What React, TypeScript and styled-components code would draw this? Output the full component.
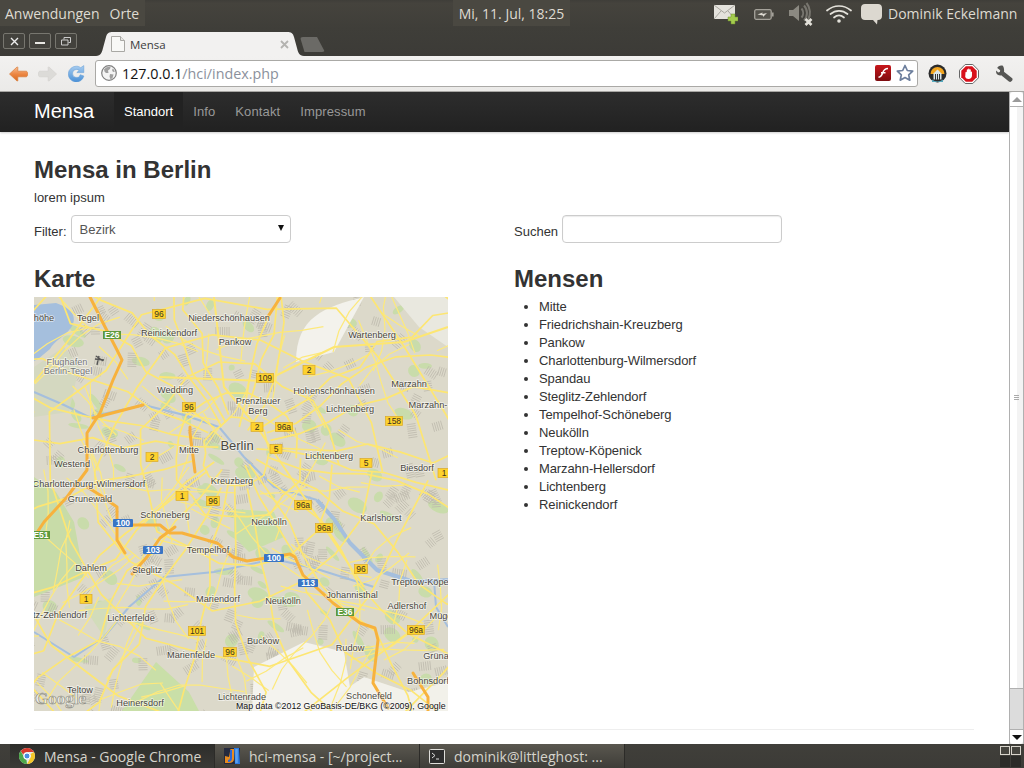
import React from 'react';
import styled, { createGlobalStyle } from 'styled-components';

const GlobalStyle = createGlobalStyle`
  html, body {
    margin: 0;
    padding: 0;
    overflow: hidden;
    background: #3c3b37;
  }
`;

const UI_FONT = `'Open Sans', 'Noto Sans', sans-serif`;
const WEB_FONT = `'Liberation Sans', Arial, sans-serif`;

const Screen = styled.div`
  width: 1024px;
  height: 768px;
  display: flex;
  flex-direction: column;
  overflow: hidden;
  font-family: ${WEB_FONT};
`;

/* ubuntu top panel */
const TopPanel = styled.div`
  height: 28px;
  flex: none;
  display: flex;
  background: linear-gradient(#3f3e39, #45433d 12%, #3f3e39);
  color: #dfdbd2;
  font-family: ${UI_FONT};
  font-size: 14px;
`;

const PanelSection = styled.div<{ $w: number; $light?: boolean }>`
  width: ${(p) => p.$w}px;
  flex: none;
  height: 26px;
  display: flex;
  align-items: center;
  background: ${(p) => (p.$light ? '#4a4841' : 'transparent')};
`;

const MenuLabel = styled.span`
  margin-left: 5px;
  margin-right: 5px;
`;

const Clock = styled.span`
  width: 100%;
  text-align: center;
`;

const TraySlot = styled.div<{ $w: number }>`
  width: ${(p) => p.$w}px;
  flex: none;
  height: 28px;
  display: flex;
  align-items: center;
  justify-content: center;
`;

const UserName = styled.span`
  margin-left: 2px;
  line-height: 27px;
  white-space: nowrap;
`;

/* chrome */
const TabStrip = styled.div`
  height: 28px;
  flex: none;
  display: flex;
  background: linear-gradient(#3f3e39, #3c3b37);
  padding-left: 3px;
`;

const WindowButtons = styled.div`
  display: flex;
  gap: 4px;
  padding-top: 5px;
  width: 93px;
  flex: none;
`;

const WindowButton = styled.div`
  width: 20px;
  height: 14px;
  border: 1px solid #77766f;
  border-radius: 2px;
  display: flex;
  align-items: center;
  justify-content: center;
  background: #43423d;
`;

const Tab = styled.div`
  width: 208px;
  height: 24px;
  margin-top: 4px;
  flex: none;
  display: flex;
  align-items: center;
  padding: 0 15px 0 15px;
  box-sizing: border-box;
  background: #f2f1f0;
  clip-path: path('M0 24 C5 24 6 20 7 16 L10 5 C11 1 13 0 17 0 L191 0 C195 0 197 1 198 5 L201 16 C202 20 203 24 208 24 Z');
  color: #3c3c3c;
  font-family: ${UI_FONT};
  font-size: 11.5px;
`;

const TabTitle = styled.span`
  margin-left: 5px;
  flex: 1;
`;

const NewTab = styled.div`
  width: 25px;
  height: 15px;
  margin-top: 9px;
  margin-left: -4px;
  background: #6b6a66;
  clip-path: polygon(0 0, 68% 0, 100% 100%, 18% 100%);
  border-radius: 3px;
`;

const Toolbar = styled.div`
  height: 36px;
  flex: none;
  box-sizing: border-box;
  display: flex;
  align-items: center;
  background: linear-gradient(#f2f1f0, #ebeae8);
  border-bottom: 1px solid #a9a8a5;
  padding-left: 9px;
`;

const NavIcon = styled.div<{ $w: number; $pad?: number }>`
  width: ${(p) => p.$w}px;
  padding-left: ${(p) => p.$pad ?? 0}px;
  box-sizing: border-box;
  flex: none;
  display: flex;
  align-items: center;
`;

const Omnibox = styled.div`
  width: 823px;
  height: 27px;
  flex: none;
  box-sizing: border-box;
  display: flex;
  align-items: center;
  gap: 5px;
  background: #fff;
  border: 1px solid #aaa9a6;
  border-radius: 3px;
  padding: 0 3px 0 5px;
  margin-top: -1px;
`;

const Url = styled.div`
  flex: 1;
  font-family: ${UI_FONT};
  font-size: 14.3px;
  color: #8b919c;
`;

const UrlHost = styled.span`
  color: #111;
`;

const Browser = styled.div`
  flex: 1;
  min-height: 0;
  display: flex;
  background: #fff;
`;

const Page = styled.div`
  flex: 1;
  min-width: 0;
  display: flex;
  flex-direction: column;
  color: #333;
  font-size: 13px;
`;

const NavBar = styled.div`
  height: 40px;
  flex: none;
  display: flex;
  align-items: stretch;
  padding-left: 34px;
  background: linear-gradient(#2d2d2d, #212121);
  box-shadow: 0 1px 2px rgba(0, 0, 0, 0.2);
`;

const Brand = styled.div`
  width: 80px;
  font-size: 20px;
  line-height: 39px;
  color: #fff;
`;

const NavItem = styled.div<{ $active?: boolean }>`
  padding: 0 10px;
  line-height: 40px;
  font-size: 13px;
  letter-spacing: ${(p) => (p.$active ? '0' : '0.12px')};
  color: ${(p) => (p.$active ? '#fff' : '#999')};
  background: ${(p) => (p.$active ? '#222' : 'transparent')};
`;

const Content = styled.div`
  width: 940px;
  margin-left: 34px;
  flex: 1;
  display: flex;
  flex-direction: column;
`;

const Title = styled.h1`
  margin: 22px 0 0;
  font-size: 24px;
  line-height: 32px;
  font-weight: bold;
  color: #333;
`;

const Lead = styled.p`
  margin: 3px 0 0;
  line-height: 18px;
  color: #333;
`;

const Columns = styled.div`
  display: grid;
  grid-template-columns: 480px 460px;
`;

const FormRow = styled(Columns)`
  margin-top: 8px;
`;

const Field = styled.label`
  display: flex;
  align-items: center;
  gap: 4px;
  height: 28px;
`;

const FieldLabel = styled.span`
  padding-top: 4px;
`;

const FakeSelect = styled.div`
  width: 220px;
  height: 28px;
  box-sizing: border-box;
  display: flex;
  align-items: center;
  justify-content: space-between;
  padding: 0 6px 0 8px;
  border: 1px solid #ccc;
  border-radius: 4px;
  background: #fff;
  color: #555;
`;

const SelectArrow = styled.span`
  width: 0;
  height: 0;
  margin-bottom: 2px;
  border-left: 3.5px solid transparent;
  border-right: 3.5px solid transparent;
  border-top: 6px solid #111;
`;

const SearchInput = styled.div`
  width: 220px;
  height: 28px;
  box-sizing: border-box;
  border: 1px solid #ccc;
  border-radius: 4px;
  background: #fff;
  box-shadow: inset 0 1px 1px rgba(0, 0, 0, 0.08);
`;

const SectionTitle = styled.h2`
  margin: 0;
  font-size: 24px;
  line-height: 32px;
  font-weight: bold;
  color: #333;
`;

const ResultRow = styled(Columns)`
  margin-top: 20px;
`;

const MapFrame = styled.svg`
  display: block;
  width: 414px;
  height: 414px;
  margin-top: 2px;
`;

const MapLabel = styled.text<{ $size?: number; $muted?: boolean }>`
  font-family: ${WEB_FONT};
  font-size: ${(p) => p.$size ?? 9.2}px;
  fill: ${(p) => (p.$muted ? '#777' : '#4a4740')};
  stroke: rgba(255, 255, 255, 0.6);
  stroke-width: 1.6px;
  paint-order: stroke;
  text-anchor: middle;
`;

const ShieldText = styled.text<{ $light?: boolean }>`
  font-family: ${WEB_FONT};
  font-size: 8.5px;
  font-weight: ${(p) => (p.$light ? 'bold' : 'normal')};
  fill: ${(p) => (p.$light ? '#fff' : '#3c3420')};
  text-anchor: middle;
`;

const Attribution = styled.text`
  font-family: ${WEB_FONT};
  font-size: 8.8px;
  fill: #111;
  stroke: rgba(255, 255, 255, 0.55);
  stroke-width: 1.4px;
  paint-order: stroke;
`;

const Watermark = styled.text`
  font-family: 'Liberation Serif', serif;
  font-size: 17px;
  font-weight: bold;
  fill: rgba(255, 255, 255, 0.55);
  stroke: #8a8a80;
  stroke-width: 0.6px;
`;

const MensaList = styled.ul`
  margin: 3px 0 0;
  padding: 0 0 0 25px;
  list-style: disc;
  line-height: 18px;
  letter-spacing: -0.1px;
  color: #333;
`;

const Rule = styled.hr`
  width: 100%;
  margin: 18px 0 0;
  border: 0;
  border-top: 1px solid #eee;
`;

const ScrollBar = styled.div`
  width: 15px;
  flex: none;
  box-sizing: border-box;
  display: flex;
  flex-direction: column;
  background: #dcdcdc;
  border-left: 1px solid #b0b0b0;
  border-right: 1px solid #b0b0b0;
`;

const ScrollButton = styled.div<{ $down?: boolean }>`
  height: 15px;
  flex: none;
  display: flex;
  align-items: center;
  justify-content: center;
  background: #fff;
  border-radius: ${(p) => (p.$down ? '0 0 3px 3px' : '3px 3px 0 0')};
  border-top: ${(p) => (p.$down ? '1px solid #b0b0b0' : '0')};
  border-bottom: ${(p) => (p.$down ? '0' : '1px solid #b0b0b0')};
  box-sizing: border-box;
`;

const ScrollArrow = styled.span<{ $down?: boolean }>`
  width: 0;
  height: 0;
  border-left: 5px solid transparent;
  border-right: 5px solid transparent;
  ${(p) => (p.$down ? 'border-top: 5px solid #111;' : 'border-bottom: 5px solid #9a9a9a;')}
`;

const ScrollThumb = styled.div`
  height: 581px;
  flex: none;
  display: flex;
  flex-direction: column;
  align-items: center;
  justify-content: center;
  gap: 1px;
  background: linear-gradient(90deg, #fff 55%, #f3f3f3 55%);
  border-bottom: 1px solid #b0b0b0;
`;

const Grip = styled.span`
  width: 5px;
  height: 1px;
  background: #aaa;
`;

const ScrollTrack = styled.div`
  flex: 1;
`;

/* ubuntu bottom panel */
const TaskBar = styled.div`
  height: 24px;
  flex: none;
  display: flex;
  background: linear-gradient(#403f3a, #3c3b37);
  padding-left: 10px;
  font-family: ${UI_FONT};
  font-size: 14px;
  color: #d6d4cc;
`;

const TaskItem = styled.div<{ $active?: boolean }>`
  width: 205px;
  flex: none;
  box-sizing: border-box;
  display: flex;
  align-items: center;
  gap: 9px;
  padding-left: 9px;
  border-right: 1px solid #2c2b28;
  white-space: nowrap;
  background: ${(p) => (p.$active ? 'linear-gradient(#2d2d2a, #3b3a36)' : 'linear-gradient(#5a574f, #3e3d38)')};
`;

const TaskSpacer = styled.div`
  flex: 1;
`;

const Workspaces = styled.div`
  display: grid;
  grid-template-columns: 10px 10px;
  grid-template-rows: 9px 11px;
  gap: 1px;
  width: 24px;
  flex: none;
  padding-top: 2px;
`;

const Workspace = styled.span<{ $on?: boolean }>`
  background: ${(p) => (p.$on ? '#45443e' : '#2b2b28')};
  border: ${(p) => (p.$on ? '1px solid #d8d5cc' : '0')};
  box-sizing: border-box;
`;

/* ---- tray + toolbar icons ---- */

const MailIcon = () => (
  <svg width="25" height="22" viewBox="0 0 25 22">
    <path d="M1 2h21v14H1z" fill="#e4e2dc" />
    <path d="M1 2l10.5 8L22 2M1 16l7-8M22 16l-7-8" fill="none" stroke="#a8a69f" strokeWidth="1" />
    <path d="M15 14h3v-3h4v3h3v4h-3v3h-4v-3h-3z" fill="#a4cb4e" stroke="#6f8f2c" strokeWidth=".5" />
  </svg>
);

const BatteryIcon = () => (
  <svg width="20" height="11" viewBox="0 0 20 11">
    <rect x=".7" y=".7" width="16.5" height="9.6" rx="1.5" fill="#55534c" stroke="#a5a29a" strokeWidth="1.3" />
    <rect x="17.8" y="3.5" width="1.8" height="4" fill="#a5a29a" />
    <path d="M3.5 5.5l5-2v1.6l4.5-1-4 4V6.6z" fill="#dcd9d1" />
  </svg>
);

const SpeakerIcon = () => (
  <svg width="26" height="24" viewBox="0 0 26 24">
    <path d="M1 8h4l6-5v16l-6-5H1z" fill="#8b8981" />
    <path d="M13.5 6.5a7 7 0 0 1 0 9M16 3.5a11 11 0 0 1 0 15M18.5 1a15 15 0 0 1 1.5 17" fill="none" stroke="#78766f" strokeWidth="2" />
    <path d="M17.5 17l6 6m0-6l-6 6" stroke="#e3e1da" strokeWidth="2.6" />
  </svg>
);

const WifiIcon = () => (
  <svg width="26" height="20" viewBox="0 0 26 20">
    <g fill="none" stroke="#e4e2db" strokeWidth="1.7" strokeLinecap="round">
      <path d="M1 6.5c7-6 17-6 24 0" />
      <path d="M4.5 10c5-4.2 12-4.2 17 0" />
      <path d="M8 13.5c3-2.500 7-2.500 10 0" />
    </g>
    <circle cx="13" cy="17" r="1.8" fill="#e4e2db" />
  </svg>
);

const BubbleIcon = () => (
  <svg width="23" height="22" viewBox="0 0 23 22">
    <path d="M5 1h13c2.500 0 4 1.500 4 4v8c0 2.500-1.500 4-4 4h-.5l-.5 4.500L13 17H5c-2.500 0-4-1.500-4-4V5c0-2.500 1.500-4 4-4z" fill="#dcd8d0" />
  </svg>
);

const CloseGlyph = () => (
  <svg width="9" height="9" viewBox="0 0 9 9">
    <path d="M1 1l7 7M8 1L1 8" stroke="#eee" strokeWidth="1.4" />
  </svg>
);

const MinGlyph = () => (
  <svg width="10" height="8" viewBox="0 0 10 8">
    <path d="M0 6h10" stroke="#e8e8e4" strokeWidth="2" />
  </svg>
);

const RestoreGlyph = () => (
  <svg width="10" height="9" viewBox="0 0 10 9">
    <path d="M3 2.5V.5h6.500v5H7.500M.5 3h6.500v5H.5z" fill="none" stroke="#ccc" />
  </svg>
);

const PageIcon = () => (
  <svg width="14" height="16" viewBox="0 0 14 16">
    <path d="M.5.5h9l4 4v11H.5z" fill="#f8f8f6" stroke="#a9a8a4" />
    <path d="M9.5.5v4h4" fill="#e6e5e2" stroke="#a9a8a4" />
  </svg>
);

const TabClose = () => (
  <svg width="9" height="9" viewBox="0 0 9 9">
    <path d="M1 1l7 7M8 1L1 8" stroke="#b4b3b0" strokeWidth="1.8" />
  </svg>
);

const BackIcon = () => (
  <svg width="19" height="16" viewBox="0 0 19 16">
    <defs>
      <linearGradient id="backFill" x1="0" y1="0" x2="0" y2="1">
        <stop offset="0" stopColor="#f8bc92" />
        <stop offset=".5" stopColor="#ec8743" />
        <stop offset="1" stopColor="#d8681f" />
      </linearGradient>
    </defs>
    <path d="M.5 8L8 1c.4-.3.8 0 .8.4v3.800h8c1 0 1.700.7 1.700 1.500v2.600c0 .8-.7 1.500-1.700 1.500h-8v3.800c0 .4-.4.7-.8.4z" fill="url(#backFill)" stroke="#d97c3a" strokeWidth=".7" strokeLinejoin="round" />
  </svg>
);

const ForwardIcon = () => (
  <svg width="19" height="16" viewBox="0 0 19 16">
    <path d="M18.5 8L11 1c-.4-.3-.8 0-.8.4v3.800h-8C1.200 5.200.5 5.900.5 6.700v2.600c0 .8.700 1.500 1.700 1.500h8v3.800c0 .4.400.7.800.4z" fill="#dcdbd8" stroke="#d4d3d0" strokeWidth=".7" strokeLinejoin="round" />
  </svg>
);

const ReloadIcon = () => (
  <svg width="17" height="17" viewBox="0 0 17 17">
    <defs>
      <linearGradient id="reloadFill" x1="0" y1="0" x2="0" y2="1">
        <stop offset="0" stopColor="#a8cdf0" />
        <stop offset="1" stopColor="#4a90d6" />
      </linearGradient>
    </defs>
    <path d="M8.5 1.200c1.700 0 3.100.6 4.200 1.500L15.800.6v7h-7l2.400-2.300c-.7-.6-1.600-.9-2.700-.9a4 4 0 1 0 3.800 5.300l3.600 1.300A7.900 7.900 0 1 1 8.500 1.200z" fill="url(#reloadFill)" stroke="#5f9ad6" strokeWidth=".5" />
  </svg>
);

const GlobeIcon = () => (
  <svg width="16" height="16" viewBox="0 0 16 16">
    <circle cx="8" cy="8" r="7.3" fill="#f4f4f4" stroke="#808080" strokeWidth="1.2" />
    <path d="M3 4.500c2-2.500 5-3 6.500-2.500L9 4 7 5.500 7.500 8 5 8 3.500 6.500zM9 9l3.500.5-1 3.500-2 1.500-1-3zM12 3.500l2 3-2 .5-1-2z" fill="#a0a0a0" />
  </svg>
);

const FlashIcon = () => (
  <svg width="16" height="16" viewBox="0 0 16 16">
    <defs>
      <linearGradient id="flashFill" x1="0" y1="0" x2="0" y2="1">
        <stop offset="0" stopColor="#c8161b" />
        <stop offset="1" stopColor="#7d0d10" />
      </linearGradient>
    </defs>
    <rect width="16" height="16" rx="2" fill="url(#flashFill)" />
    <path d="M13 3.500c-3.500 0-4.500 2-5.300 4.200C7 10 6.300 11.800 3.500 12.300M6 7.800h4.500" fill="none" stroke="#fff" strokeWidth="1.5" />
  </svg>
);

const StarIcon = () => (
  <svg width="18" height="18" viewBox="0 0 18 18">
    <path d="M9 1.500l2.300 5 5.400.6-4 3.700 1.100 5.400L9 13.500l-4.800 2.700 1.100-5.400-4-3.700 5.400-.6z" fill="#fff" stroke="#6d7f9d" strokeWidth="1.7" strokeLinejoin="round" />
  </svg>
);

const ExtensionDomeIcon = () => (
  <svg width="19" height="19" viewBox="0 0 19 19">
    <circle cx="9.500" cy="9.500" r="9" fill="#2b2b2b" />
    <path d="M2.500 10a7 7 0 0 1 14 0z" fill="#f2a51f" />
    <path d="M5.500 9.500l4-4 4 4v6h-8z" fill="#d9e4e8" />
    <path d="M7.500 10v6M9.500 10v6M11.500 10v6" stroke="#333" strokeWidth="1" />
    <path d="M4 15.500c3.500 2.500 7.500 2.500 11 0v2.500H4z" fill="#58a8bd" />
  </svg>
);

const AdblockIcon = () => (
  <svg width="20" height="20" viewBox="0 0 20 20">
    <path d="M6.200.5h7.600l5.700 5.700v7.600l-5.700 5.700H6.200L.5 13.800V6.200z" fill="#fff" stroke="#666" />
    <path d="M6.800 2.300h6.400l4.500 4.500v6.400l-4.500 4.500H6.800l-4.500-4.500V6.800z" fill="#d8111b" />
    <path d="M6.500 8.500c0-1 1.200-1 1.300 0V6c0-1 1.300-1 1.300 0V5.300c0-1 1.400-1 1.400 0V6c0-.9 1.300-.9 1.300 0v2c0-.8 1.200-.8 1.200 0v3.500c0 2-1.500 3.500-3.500 3.500-1.800 0-2.700-.8-3.300-2.200z" fill="#fff" />
  </svg>
);

const WrenchIcon = () => (
  <svg width="17" height="17" viewBox="0 0 17 17">
    <path d="M6.500.6C4.300 0 2 1 1.200 3l3 2.200-.4 1.800-1.700.6L.3 5.500C-.4 7.700.7 9.800 3 10.300c.8.200 1.500.1 2.200-.1l7.700 6.300c.8.600 1.800.5 2.500-.2l.8-.9c.6-.8.500-1.800-.3-2.400L8 6.800c.4-2.800-.4-5.500-1.500-6.200z" fill="#565654" />
  </svg>
);

const ChromeLogo = () => (
  <svg width="16" height="16" viewBox="0 0 16 16">
    <circle cx="8" cy="8" r="8" fill="#e8e8e8" />
    <path d="M8 0a8 8 0 0 1 6.900 4H8a4 4 0 0 0-3.800 2.800L1.700 3A8 8 0 0 1 8 0z" fill="#d93a2c" />
    <path d="M14.900 4A8 8 0 0 1 8 16l3.400-5.900A4 4 0 0 0 11.500 6z" fill="#f5c728" />
    <path d="M8 16A8 8 0 0 1 1.700 3l2.600 4.800a4 4 0 0 0 3.200 4.100z" fill="#4da84a" />
    <circle cx="8" cy="8" r="3" fill="#4a8ee0" stroke="#fff" strokeWidth="1" />
  </svg>
);

const IdeaLogo = () => (
  <svg width="16" height="18" viewBox="0 0 16 18">
    <path d="M0 1h16v16H0z" fill="#252a3e" />
    <path d="M10 1h5l1 16h-5z" fill="#2e7be0" />
    <path d="M6.500 2H10v10c0 2.500-2 4-5 4H1V9l4 1z" fill="#e88b1f" />
    <path d="M7 3v8c0 2-1 3-3 3" fill="none" stroke="#2a66d8" strokeWidth="2" />
    <path d="M12.500 2v14" stroke="#5aa0f0" strokeWidth="2.5" />
  </svg>
);

const TerminalLogo = () => (
  <svg width="16" height="15" viewBox="0 0 16 15">
    <rect x=".5" y=".5" width="15" height="14" rx="1" fill="#2d2d2d" stroke="#e0dfdb" />
    <path d="M3 4l3 2.500L3 9M7 10h3" fill="none" stroke="#ddd" strokeWidth="1" />
  </svg>
);

/* ---- the map ---- */

type Pt = [number, number];

const line = (pts: Pt[]) => pts.map((p, i) => `${i ? 'L' : 'M'}${p[0]} ${p[1]}`).join(' ');

const seeded = (seed: number) => () => {
  seed = (seed + 0x6d2b79f5) | 0;
  let t = Math.imul(seed ^ (seed >>> 15), 1 | seed);
  t = (t + Math.imul(t ^ (t >>> 7), 61 | t)) ^ t;
  return ((t ^ (t >>> 14)) >>> 0) / 4294967296;
};

const CENTER: Pt = [203, 150];

// little gray street blocks, clustered so they read as town texture
const makeStreets = () => {
  const rnd = seeded(42);
  const out: string[] = [];
  for (let c = 0; c < 240; c++) {
    const cx = rnd() * 414;
    const cy = rnd() * 414;
    const a = rnd() * Math.PI;
    const n = 4 + Math.floor(rnd() * 4);
    const dx = Math.cos(a);
    const dy = Math.sin(a);
    for (let i = 0; i < n; i++) {
      const x = cx - dy * i * 2.2;
      const y = cy + dx * i * 2.2;
      out.push(`M${x.toFixed(1)} ${y.toFixed(1)}l${(dx * 9).toFixed(1)} ${(dy * 9).toFixed(1)}`);
    }
  }
  return out.join(' ');
};

const makeGreens = () => {
  const rnd = seeded(7);
  const out: { x: number; y: number; w: number; h: number; r: number }[] = [];
  for (let i = 0; i < 110; i++) {
    out.push({ x: rnd() * 414, y: rnd() * 414, w: 6 + rnd() * 16, h: 4 + rnd() * 10, r: rnd() * 60 });
  }
  return out;
};

const makeRadials = () => {
  const rnd = seeded(19);
  const out: string[] = [];
  for (let deg = 0; deg < 360; deg += 13) {
    const pts: Pt[] = [];
    let a = (deg * Math.PI) / 180;
    for (let r = 18 + rnd() * 25; r < 340; r += 32) {
      a += (rnd() - 0.5) * 0.16;
      pts.push([+(CENTER[0] + Math.cos(a) * r).toFixed(1), +(CENTER[1] + 40 * (r / 340) + Math.sin(a) * r).toFixed(1)]);
    }
    out.push(line(pts));
  }
  return out;
};

const makeRings = () => {
  const rnd = seeded(23);
  const out: string[] = [];
  [34, 62, 98, 138, 185, 235, 290].forEach((r) => {
    const pts: Pt[] = [];
    for (let deg = 0; deg <= 360; deg += 20) {
      const a = (deg * Math.PI) / 180;
      const rr = r + (rnd() - 0.5) * (r * 0.16);
      pts.push([+(CENTER[0] + Math.cos(a) * rr).toFixed(1), +(CENTER[1] + r * 0.18 + Math.sin(a) * rr).toFixed(1)]);
    }
    out.push(line(pts));
  });
  return out;
};

const makeMinorRoads = () => {
  const rnd = seeded(77);
  const out: string[] = [];
  for (let i = 0; i < 110; i++) {
    let x = rnd() * 414;
    let y = rnd() * 414;
    let a = rnd() * Math.PI * 2;
    const pts: Pt[] = [[+x.toFixed(1), +y.toFixed(1)]];
    const n = 2 + Math.floor(rnd() * 4);
    for (let k = 0; k < n; k++) {
      a += (rnd() - 0.5) * 0.6;
      x += Math.cos(a) * 22;
      y += Math.sin(a) * 22;
      pts.push([+x.toFixed(1), +y.toFixed(1)]);
    }
    out.push(line(pts));
  }
  return out;
};

const STREETS = makeStreets();
const GREENS = makeGreens();
const RADIALS = makeRadials();
const RINGS = makeRings();
const MINOR = makeMinorRoads();

const AUTOBAHNS: Pt[][] = [
  [[56, 0], [69, 26], [83, 53], [88, 63], [79, 83], [66, 116], [53, 136], [53, 173], [33, 200], [10, 225], [0, 240]],
  [[53, 190], [66, 198], [83, 210], [83, 243], [91, 256]],
  [[59, 121], [109, 108]],
  [[83, 228], [126, 228], [136, 236], [148, 236], [183, 246], [199, 260], [213, 264], [256, 257], [261, 260], [269, 278], [299, 306], [326, 326], [341, 331], [344, 343], [339, 386], [354, 411]],
  [[141, 230], [126, 241], [113, 260], [98, 277]],
  [[156, 130], [156, 136], [161, 175]],
  [[246, 1], [233, 21]],
  [[379, 376], [394, 400], [394, 414]],
];

const WATER: string[] = [
  'M0 8 L22 6 C40 12 44 22 36 32 C30 40 20 44 16 52 L4 62 L0 64 Z',
];

const WATERWAYS: Pt[][] = [
  [[0, 95], [30, 108], [55, 120], [110, 108], [150, 118], [185, 130]],
  [[283, 203], [300, 222], [316, 246], [343, 273], [380, 285], [414, 283]],
  [[0, 335], [40, 360], [70, 340], [95, 310], [130, 280], [180, 275], [240, 262], [283, 272], [340, 290]],
  [[400, 283], [402, 310], [414, 330]],
  [[185, 130], [210, 160], [240, 190], [283, 203]],
];

const SHIELDS: [number, number, string][] = [
  [125, 17, '96'], [275, 73, '2'], [231, 81, '109'], [155, 110, '96'], [360, 124, '158'],
  [223, 130, '2'], [250, 130, '96a'], [242, 152, '5'], [118, 160, '2'], [332, 166, '5'],
  [410, 176, '1'], [148, 199, '1'], [179, 204, '96'], [269, 208, '96a'], [290, 231, '96a'],
  [327, 272, '96'], [52, 302, '1'], [163, 334, '101'], [196, 355, '96'], [382, 333, '96a'],
];

const BLUE_SHIELDS: [number, number, string][] = [
  [89, 226, '100'], [119, 253, '103'], [240, 261, '100'], [274, 286, '113'],
];

const GREEN_SHIELDS: [number, number, string][] = [
  [78, 38, 'E26'], [7, 238, 'E51'], [311, 315, 'E36'],
];

const LABELS: [number, number, string][] = [
  [10, 24, 'höhe'], [54, 24, 'Tegel'], [195, 24, 'Niederschönhausen'], [135, 39, 'Reinickendorf'],
  [201, 48, 'Pankow'], [338, 41, 'Wartenberg'], [141, 96, 'Wedding'], [300, 97, 'Hohenschönhausen'],
  [375, 90, 'Marzahn'], [394, 111, 'Marzahn-'], [224, 107, 'Prenzlauer'], [224, 117, 'Berg'],
  [316, 115, 'Lichtenberg'], [74, 156, 'Charlottenburg'], [155, 156, 'Mitte'], [295, 162, 'Lichtenberg'],
  [38, 170, 'Westend'], [383, 174, 'Biesdorf'], [55, 190, 'Charlottenburg-Wilmersdorf'], [198, 187, 'Kreuzberg'],
  [56, 205, 'Grunewald'], [131, 221, 'Schöneberg'], [235, 228, 'Neukölln'], [347, 224, 'Karlshorst'],
  [174, 256, 'Tempelhof'], [57, 274, 'Dahlem'], [113, 276, 'Steglitz'], [318, 301, 'Johannisthal'],
  [386, 288, 'Treptow-Köpe'], [184, 305, 'Mariendorf'], [249, 307, 'Neukölln'], [373, 312, 'Adlershof'],
  [407, 322, 'Mügg'], [26, 321, 'tz-Zehlendorf'], [97, 324, 'Lichterfelde'], [229, 347, 'Buckow'],
  [316, 354, 'Rudow'], [157, 361, 'Marienfelde'], [402, 362, 'Grüna'], [394, 387, 'Bohnsdorf'],
  [46, 396, 'Teltow'], [106, 409, 'Heinersdorf'], [208, 403, 'Lichtenrade'], [335, 402, 'Schönefeld'],
];

const BerlinMap = () => (
  <MapFrame viewBox="0 0 414 414">
    <defs>
      <filter id="soft" x="0" y="0" width="100%" height="100%">
        <feGaussianBlur stdDeviation="0.35" />
      </filter>
    </defs>
    <g filter="url(#soft)">
      <rect width="414" height="414" fill="#dcd9ca" />
      {GREENS.map((g, i) => (
        <ellipse key={i} cx={g.x} cy={g.y} rx={g.w / 2} ry={g.h / 2} transform={`rotate(${g.r} ${g.x} ${g.y})`} fill="#c9dcab" />
      ))}
      <path d={STREETS} stroke="#bdb9ac" strokeWidth=".8" fill="none" />
      {/* parks, forests, airfields */}
      <path d="M0 70 L30 50 L45 70 L35 115 L0 120 Z" fill="#d4d8c0" />
      <path d="M0 180 L22 195 L40 225 L50 280 L0 300 Z" fill="#c8dca8" />
      <path d="M200 212 L240 215 L250 240 L215 255 L200 240 Z" fill="#c9dfa9" />
      <path d="M88 414 L122 365 L155 395 L165 414 Z" fill="#c9dfa8" />
      <path d="M262 65 C262 20 290 10 330 0 L300 55 Z" fill="#f3f2ec" />
      <path d="M220 370 L270 345 L310 355 L320 414 L218 414 Z" fill="#f4f3ee" />
      <path d="M300 400 L330 380 L375 395 L414 385 L414 414 L300 414 Z" fill="#f2f1ea" />
      <path d="M360 0 L414 0 L414 50 L385 30 Z" fill="#e9e8df" />
      <path d="M50 310 L80 300 L70 340 Z" fill="#d2dcba" />
      {/* water */}
      {WATER.map((d) => (
        <path key={d} d={d} fill="#a5bfdd" />
      ))}
      {WATERWAYS.map((w, i) => (
        <path key={i} d={line(w)} fill="none" stroke="#a5bfdd" strokeWidth={i === 1 ? 4 : 2} strokeLinejoin="round" />
      ))}
      {/* roads */}
      {MINOR.map((d, i) => (
        <path key={i} d={d} fill="none" stroke="#fde97c" strokeWidth="1.2" strokeLinejoin="round" />
      ))}
      {RINGS.map((d, i) => (
        <path key={i} d={d} fill="none" stroke="#fde672" strokeWidth="1.7" strokeLinejoin="round" />
      ))}
      {RADIALS.map((d, i) => (
        <path key={i} d={d} fill="none" stroke="#fde672" strokeWidth="1.7" strokeLinejoin="round" />
      ))}
      <path d="M125 80 L231 84 L300 50 L370 45 L414 30" fill="none" stroke="#fde672" strokeWidth="2.2" />
      <path d="M180 0 L190 90 L223 130 L270 200 L330 290" fill="none" stroke="#fde672" strokeWidth="2" />
      {AUTOBAHNS.map((a, i) => (
        <path key={i} d={line(a)} fill="none" stroke="#f7b23e" strokeWidth="3" strokeLinejoin="round" strokeLinecap="round" />
      ))}
      {/* airport mark */}
      <path d="M62 59l7 5m-4-5l-2 9m-2-6l9 1" stroke="#555" strokeWidth="1.3" fill="none" />
    </g>
    <MapLabel $muted x={33} y={68}>Flughafen</MapLabel>
    <MapLabel $muted x={34} y={77}>Berlin-Tegel</MapLabel>
    {LABELS.map(([x, y, t]) => (
      <MapLabel key={`${t}${x}`} x={x} y={y}>{t}</MapLabel>
    ))}
    <MapLabel x={203} y={153} $size={13}>Berlin</MapLabel>
    {SHIELDS.map(([x, y, t]) => {
      const w = t.length > 1 ? (t.length > 2 ? 17 : 13) : 12;
      return (
        <g key={`${x}-${y}`}>
          <rect x={x - w / 2} y={y - 4.5} width={w} height="9" fill="#fdd22e" stroke="#d9a92a" strokeWidth=".7" />
          <ShieldText x={x} y={y + 3}>{t}</ShieldText>
        </g>
      );
    })}
    {BLUE_SHIELDS.map(([x, y, t]) => (
      <g key={`${x}-${y}`}>
        <rect x={x - 10} y={y - 4} width="20" height="8" rx="1" fill="#3a75c4" />
        <ShieldText $light x={x} y={y + 3}>{t}</ShieldText>
      </g>
    ))}
    {GREEN_SHIELDS.map(([x, y, t]) => (
      <g key={`${x}-${y}`}>
        <rect x={x - 9} y={y - 4} width="18" height="8" fill="#5d9a3c" />
        <ShieldText $light x={x} y={y + 3}>{t}</ShieldText>
      </g>
    ))}
    <Watermark x={1} y={407}>Google</Watermark>
    <Attribution x={202} y={412}>Map data ©2012 GeoBasis-DE/BKG (©2009), Google</Attribution>
  </MapFrame>
);

const MENSEN = [
  'Mitte',
  'Friedrichshain-Kreuzberg',
  'Pankow',
  'Charlottenburg-Wilmersdorf',
  'Spandau',
  'Steglitz-Zehlendorf',
  'Tempelhof-Schöneberg',
  'Neukölln',
  'Treptow-Köpenick',
  'Marzahn-Hellersdorf',
  'Lichtenberg',
  'Reinickendorf',
];

const NAV = ['Standort', 'Info', 'Kontakt', 'Impressum'];

export default function App() {
  return (
    <Screen>
      <GlobalStyle />
      <TopPanel>
        <PanelSection $w={145} $light>
          <MenuLabel>Anwendungen</MenuLabel>
          <MenuLabel>Orte</MenuLabel>
        </PanelSection>
        <PanelSection $w={308} />
        <PanelSection $w={117} $light>
          <Clock>Mi, 11. Jul, 18:25</Clock>
        </PanelSection>
        <PanelSection $w={132} />
        <TraySlot $w={46}><MailIcon /></TraySlot>
        <TraySlot $w={31}><BatteryIcon /></TraySlot>
        <TraySlot $w={43}><SpeakerIcon /></TraySlot>
        <TraySlot $w={34}><WifiIcon /></TraySlot>
        <TraySlot $w={30}><BubbleIcon /></TraySlot>
        <UserName>Dominik Eckelmann</UserName>
      </TopPanel>

      <TabStrip>
        <WindowButtons>
          <WindowButton><CloseGlyph /></WindowButton>
          <WindowButton><MinGlyph /></WindowButton>
          <WindowButton><RestoreGlyph /></WindowButton>
        </WindowButtons>
        <Tab>
          <PageIcon />
          <TabTitle>Mensa</TabTitle>
          <TabClose />
        </Tab>
        <NewTab />
      </TabStrip>

      <Toolbar>
        <NavIcon $w={29}><BackIcon /></NavIcon>
        <NavIcon $w={30}><ForwardIcon /></NavIcon>
        <NavIcon $w={27}><ReloadIcon /></NavIcon>
        <Omnibox>
          <GlobeIcon />
          <Url><UrlHost>127.0.0.1</UrlHost>/hci/index.php</Url>
          <FlashIcon />
          <StarIcon />
        </Omnibox>
        <NavIcon $w={41} $pad={10}><ExtensionDomeIcon /></NavIcon>
        <NavIcon $w={37}><AdblockIcon /></NavIcon>
        <NavIcon $w={17}><WrenchIcon /></NavIcon>
      </Toolbar>

      <Browser>
        <Page>
          <NavBar>
            <Brand>Mensa</Brand>
            {NAV.map((n, i) => (
              <NavItem key={n} $active={i === 0}>{n}</NavItem>
            ))}
          </NavBar>
          <Content>
            <Title>Mensa in Berlin</Title>
            <Lead>lorem ipsum</Lead>
            <FormRow>
              <Field>
                <FieldLabel>Filter:</FieldLabel>
                <FakeSelect>
                  Bezirk
                  <SelectArrow />
                </FakeSelect>
              </Field>
              <Field>
                <FieldLabel>Suchen</FieldLabel>
                <SearchInput />
              </Field>
            </FormRow>
            <ResultRow>
              <div>
                <SectionTitle>Karte</SectionTitle>
                <BerlinMap />
              </div>
              <div>
                <SectionTitle>Mensen</SectionTitle>
                <MensaList>
                  {MENSEN.map((m) => (
                    <li key={m}>{m}</li>
                  ))}
                </MensaList>
              </div>
            </ResultRow>
            <Rule />
          </Content>
        </Page>
        <ScrollBar>
          <ScrollButton><ScrollArrow /></ScrollButton>
          <ScrollThumb>
            <Grip />
            <Grip />
            <Grip />
          </ScrollThumb>
          <ScrollTrack />
          <ScrollButton $down><ScrollArrow $down /></ScrollButton>
        </ScrollBar>
      </Browser>

      <TaskBar>
        <TaskItem $active><ChromeLogo />Mensa - Google Chrome</TaskItem>
        <TaskItem><IdeaLogo />hci-mensa - [~/project...</TaskItem>
        <TaskItem><TerminalLogo />dominik@littleghost: ...</TaskItem>
        <TaskSpacer />
        <Workspaces>
          <Workspace $on />
          <Workspace $on />
          <Workspace />
          <Workspace />
        </Workspaces>
      </TaskBar>
    </Screen>
  );
}
